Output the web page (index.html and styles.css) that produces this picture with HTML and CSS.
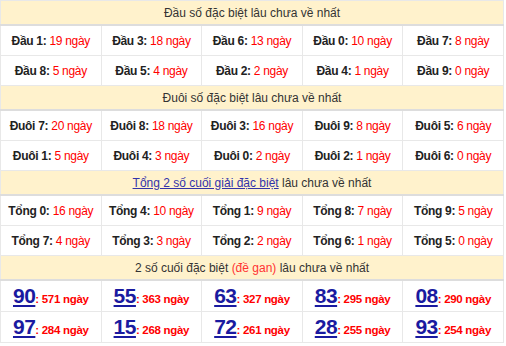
FILE: index.html
```html
<!DOCTYPE html>
<html>
<head>
<meta charset="utf-8">
<link rel="stylesheet" href="styles.css">
</head>
<body>
<table class="gan">
  <tr class="head"><td colspan="5">Đầu số đặc biệt lâu chưa về nhất</td></tr>
  <tr class="row">
    <td><b>Đầu 1:</b> <span class="d">19 ngày</span></td>
    <td><b>Đầu 3:</b> <span class="d">18 ngày</span></td>
    <td><b>Đầu 6:</b> <span class="d">13 ngày</span></td>
    <td><b>Đầu 0:</b> <span class="d">10 ngày</span></td>
    <td><b>Đầu 7:</b> <span class="d">8 ngày</span></td>
  </tr>
  <tr class="row">
    <td><b>Đầu 8:</b> <span class="d">5 ngày</span></td>
    <td><b>Đầu 5:</b> <span class="d">4 ngày</span></td>
    <td><b>Đầu 2:</b> <span class="d">2 ngày</span></td>
    <td><b>Đầu 4:</b> <span class="d">1 ngày</span></td>
    <td><b>Đầu 9:</b> <span class="d">0 ngày</span></td>
  </tr>
  <tr class="head"><td colspan="5">Đuôi số đặc biệt lâu chưa về nhất</td></tr>
  <tr class="row">
    <td><b>Đuôi 7:</b> <span class="d">20 ngày</span></td>
    <td><b>Đuôi 8:</b> <span class="d">18 ngày</span></td>
    <td><b>Đuôi 3:</b> <span class="d">16 ngày</span></td>
    <td><b>Đuôi 9:</b> <span class="d">8 ngày</span></td>
    <td><b>Đuôi 5:</b> <span class="d">6 ngày</span></td>
  </tr>
  <tr class="row">
    <td><b>Đuôi 1:</b> <span class="d">5 ngày</span></td>
    <td><b>Đuôi 4:</b> <span class="d">3 ngày</span></td>
    <td><b>Đuôi 0:</b> <span class="d">2 ngày</span></td>
    <td><b>Đuôi 2:</b> <span class="d">1 ngày</span></td>
    <td><b>Đuôi 6:</b> <span class="d">0 ngày</span></td>
  </tr>
  <tr class="head"><td colspan="5"><a href="#" class="link">Tổng 2 số cuối giải đặc biệt</a> lâu chưa về nhất</td></tr>
  <tr class="row">
    <td><b>Tổng 0:</b> <span class="d">16 ngày</span></td>
    <td><b>Tổng 4:</b> <span class="d">10 ngày</span></td>
    <td><b>Tổng 1:</b> <span class="d">9 ngày</span></td>
    <td><b>Tổng 8:</b> <span class="d">7 ngày</span></td>
    <td><b>Tổng 9:</b> <span class="d">5 ngày</span></td>
  </tr>
  <tr class="row">
    <td><b>Tổng 7:</b> <span class="d">4 ngày</span></td>
    <td><b>Tổng 3:</b> <span class="d">3 ngày</span></td>
    <td><b>Tổng 2:</b> <span class="d">2 ngày</span></td>
    <td><b>Tổng 6:</b> <span class="d">1 ngày</span></td>
    <td><b>Tổng 5:</b> <span class="d">0 ngày</span></td>
  </tr>
  <tr class="head"><td colspan="5">2 số cuối đặc biệt <span class="red">(đề gan)</span> lâu chưa về nhất</td></tr>
  <tr class="row big">
    <td><a href="#" class="num">90</a><b class="d">: 571 ngày</b></td>
    <td><a href="#" class="num">55</a><b class="d">: 363 ngày</b></td>
    <td><a href="#" class="num">63</a><b class="d">: 327 ngày</b></td>
    <td><a href="#" class="num">83</a><b class="d">: 295 ngày</b></td>
    <td><a href="#" class="num">08</a><b class="d">: 290 ngày</b></td>
  </tr>
  <tr class="row big">
    <td><a href="#" class="num">97</a><b class="d">: 284 ngày</b></td>
    <td><a href="#" class="num">15</a><b class="d">: 268 ngày</b></td>
    <td><a href="#" class="num">72</a><b class="d">: 261 ngày</b></td>
    <td><a href="#" class="num">28</a><b class="d">: 255 ngày</b></td>
    <td><a href="#" class="num">93</a><b class="d">: 254 ngày</b></td>
  </tr>
</table>
</body>
</html>
```

FILE: styles.css
```css
html, body {
  margin: 0;
  padding: 0;
  background: #fff;
}
.gan {
  width: 504px;
  border-collapse: collapse;
  font-family: "Liberation Sans", Arial, sans-serif;
  font-size: 12px;
  color: #222;
  border: 1px solid #ddd;
}
.gan td {
  border: 1px solid #e8e8e8;
  text-align: center;
  padding: 0;
}
.head td {
  background: #fff2cc;
  height: 23px;
  font-size: 12px;
  color: #333;
  border-bottom: 2px solid #ddd;
}
.row td {
  height: 29px;
  width: 20%;
  letter-spacing: -0.3px;
}
.row b {
  font-weight: bold;
  color: #222;
}
.d {
  color: #f00;
}
.row b.d {
  color: #f00;
}
.link {
  color: #3333aa;
  text-decoration: underline;
}
.red {
  color: #f33;
}
.big td {
  height: 30px;
}
.num {
  font-size: 21px;
  font-weight: bold;
  color: #1a1aa0;
  text-decoration: underline;
  letter-spacing: -0.5px;
}
.big .d {
  font-size: 11.5px;
}
```
